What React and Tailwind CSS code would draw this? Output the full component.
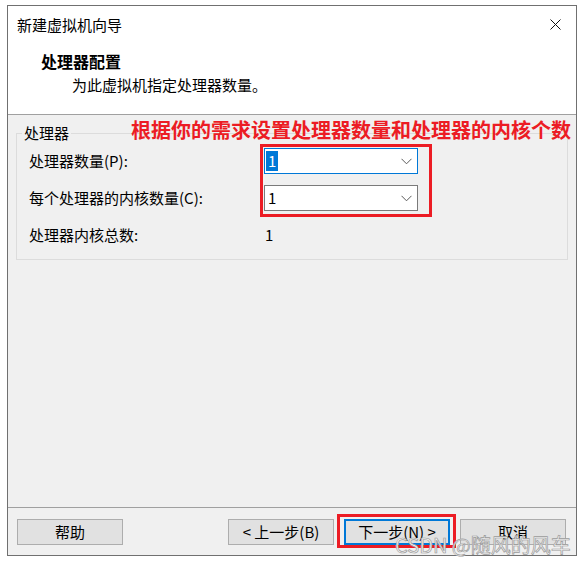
import React from "react";

function Combo({ focused }) {
    return (
        <div
            className={`flex h-[26px] w-[154px] items-center justify-between bg-white pl-[1px] pr-[5px] ${
                focused ? "border border-[#0078d7]" : "border border-[#7a7a7a]"
            }`}>
            <span className={`px-[2px] text-[15px] leading-[20px] ${focused ? "bg-[#0078d7] text-white" : "text-black"}`}>1</span>
            <svg width="11" height="7" viewBox="0 0 11 7">
                <path d="M0.5 0.8 L5.5 5.8 L10.5 0.8" stroke="#5a5a5a" strokeWidth="1" fill="none" />
            </svg>
        </div>
    );
}

function Btn({ children, primary }) {
    return (
        <button
            className={`flex h-[26px] w-[106px] items-center justify-center bg-[#e1e1e1] text-[15px] leading-[20px] text-black ${
                primary ? "border-2 border-[#0078d7]" : "border border-[#adadad]"
            }`}>
            {children}
        </button>
    );
}

export default function App() {
    return (
        <div className="relative h-[564px] w-[583px] bg-white pl-[7px] pt-[5px] font-['Noto_Sans_CJK_SC','Liberation_Sans',sans-serif]">
            <div className="relative flex h-[551px] w-[570px] flex-col border border-[#707070] bg-[#f0f0f0]">
                {/* 标题 + 头部 */}
                <div className="h-[109px] shrink-0 border-b border-[#a0a0a0] bg-white">
                    <div className="flex h-[37px] items-center justify-between pl-[9px] pr-[15px]">
                        <span className="text-[15px] leading-[20px] text-black">新建虚拟机向导</span>
                        <svg width="11" height="11" viewBox="0 0 11 11">
                            <path d="M0.5 0.5 L10.5 10.5 M10.5 0.5 L0.5 10.5" stroke="#111" strokeWidth="1" />
                        </svg>
                    </div>
                    <p className="mt-[8px] pl-[33px] text-[16px] font-bold leading-[20px] text-black">处理器配置</p>
                    <p className="mt-[4px] pl-[64px] text-[15px] leading-[20px] text-black">为此虚拟机指定处理器数量。</p>
                </div>

                {/* 内容 */}
                <div className="flex-1 px-[8px] pt-[18px]">
                    <div className="relative border border-[#dcdcdc] pb-[11px] pl-[12px] pt-[14px]">
                        <span className="absolute left-[5px] top-[-11px] bg-[#f0f0f0] px-[2px] text-[15px] leading-[20px] text-black">处理器</span>
                        <div className="flex flex-col gap-[11px]">
                            <div className="flex h-[26px] items-center">
                                <span className="w-[235px] text-[15px] leading-[20px] text-black">处理器数量(P):</span>
                                <Combo focused />
                            </div>
                            <div className="flex h-[26px] items-center">
                                <span className="w-[235px] text-[15px] leading-[20px] text-black">每个处理器的内核数量(C):</span>
                                <Combo />
                            </div>
                            <div className="flex h-[26px] items-center">
                                <span className="w-[236px] text-[15px] leading-[20px] text-black">处理器内核总数:</span>
                                <span className="text-[15px] leading-[20px] text-black">1</span>
                            </div>
                        </div>
                    </div>
                </div>

                {/* 按钮 */}
                <div className="flex h-[48px] shrink-0 items-start border-t border-[#a0a0a0] pl-[9px] pr-[10px] pt-[11px]">
                    <Btn>帮助</Btn>
                    <div className="ml-auto flex gap-[10px]">
                        <Btn>&lt; 上一步(B)</Btn>
                        <Btn primary>下一步(N) &gt;</Btn>
                        <Btn>取消</Btn>
                    </div>
                </div>

                {/* 标注 */}
                <div className="pointer-events-none absolute left-[123px] top-[113px] whitespace-nowrap text-[20px] font-bold leading-[22px] text-[#ec1c24]">
                    根据你的需求设置处理器数量和处理器的内核个数
                </div>
                <div className="pointer-events-none absolute left-[252px] top-[138px] h-[73px] w-[172px] border-[3px] border-[#ec1c24]" />
                <div className="pointer-events-none absolute left-[329px] top-[508px] h-[34px] w-[119px] border-[3px] border-[#ec1c24]" />
            </div>

            <div className="pointer-events-none absolute left-[395px] top-[533px] whitespace-nowrap text-[20px] leading-[24px] text-[#f2f2f2] [-webkit-text-stroke:0.7px_#9a9a9a]">
                CSDN @随风的风车
            </div>
        </div>
    );
}
